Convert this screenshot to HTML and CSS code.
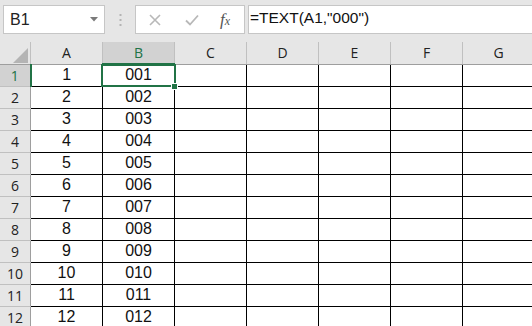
FILE: index.html
```html
<!DOCTYPE html>
<html lang="en">
<head>
    <meta charset="UTF-8">
    <title>Sheet1</title>
    <link rel="stylesheet" href="styles.css">
</head>
<body>
    <div class="formula-bar">
        <div class="name-box">
            <span>B1</span>
            <svg class="drop" width="8" height="5" viewBox="0 0 8 5"><path d="M0 0h8L4 4.5z" fill="#7a7a7a"/></svg>
        </div>
        <div class="grip">
            <svg width="3" height="12" viewBox="0 0 3 12"><rect x="0.5" y="0" width="2" height="2" fill="#b4b4b4"/><rect x="0.5" y="5" width="2" height="2" fill="#b4b4b4"/><rect x="0.5" y="10" width="2" height="2" fill="#b4b4b4"/></svg>
        </div>
        <div class="fx-box">
            <svg width="12" height="12" viewBox="0 0 12 12"><path d="M1 1l10 10M11 1L1 11" stroke="#b8b8b8" stroke-width="1.6"/></svg>
            <svg width="14" height="12" viewBox="0 0 14 12"><path d="M1 6.5l4 4L13 1.5" stroke="#b8b8b8" stroke-width="1.8" fill="none"/></svg>
            <span class="fx">f<sub>x</sub></span>
        </div>
        <div class="formula">=TEXT(A1,"000")</div>
    </div>

    <table class="sheet">
        <tr class="col-head">
            <th class="corner"><span class="tri"></span></th>
            <th>A</th>
            <th class="on">B</th>
            <th>C</th>
            <th>D</th>
            <th>E</th>
            <th>F</th>
            <th>G</th>
        </tr>
        <tr>
            <th class="row-head on">1</th><td>1</td><td class="sel">001</td><td></td><td></td><td></td><td></td><td></td>
        </tr>
        <tr><th class="row-head">2</th><td>2</td><td>002</td><td></td><td></td><td></td><td></td><td></td></tr>
        <tr><th class="row-head">3</th><td>3</td><td>003</td><td></td><td></td><td></td><td></td><td></td></tr>
        <tr><th class="row-head">4</th><td>4</td><td>004</td><td></td><td></td><td></td><td></td><td></td></tr>
        <tr><th class="row-head">5</th><td>5</td><td>005</td><td></td><td></td><td></td><td></td><td></td></tr>
        <tr><th class="row-head">6</th><td>6</td><td>006</td><td></td><td></td><td></td><td></td><td></td></tr>
        <tr><th class="row-head">7</th><td>7</td><td>007</td><td></td><td></td><td></td><td></td><td></td></tr>
        <tr><th class="row-head">8</th><td>8</td><td>008</td><td></td><td></td><td></td><td></td><td></td></tr>
        <tr><th class="row-head">9</th><td>9</td><td>009</td><td></td><td></td><td></td><td></td><td></td></tr>
        <tr><th class="row-head">10</th><td>10</td><td>010</td><td></td><td></td><td></td><td></td><td></td></tr>
        <tr><th class="row-head">11</th><td>11</td><td>011</td><td></td><td></td><td></td><td></td><td></td></tr>
        <tr><th class="row-head">12</th><td>12</td><td>012</td><td></td><td></td><td></td><td></td><td></td></tr>
    </table>
</body>
</html>
```

FILE: styles.css
```css
body {
    margin: 0;
    overflow: hidden;
    background: #fff;
    font-family: "Liberation Sans", Arial, sans-serif;
}
.formula-bar {
    display: flex;
    align-items: flex-start;
    height: 42px;
    padding: 5px 0 0 3px;
    box-sizing: border-box;
    background: #e6e6e6;
}
.name-box {
    display: flex;
    align-items: center;
    justify-content: space-between;
    width: 102px;
    height: 29px;
    box-sizing: border-box;
    padding: 0 6px 0 6px;
    background: #fff;
    border: 1px solid #c6c6c6;
    font-size: 16px;
    color: #222;
}
.grip {
    display: flex;
    justify-content: center;
    width: 30px;
    padding-top: 9px;
}
.fx-box {
    display: flex;
    align-items: center;
    width: 110px;
    height: 29px;
    box-sizing: border-box;
    padding: 0 10px 0 13px;
    gap: 24px;
    background: #fff;
    border: 1px solid #c6c6c6;
}
.fx {
    font-family: "Liberation Serif", serif;
    font-style: italic;
    font-size: 17px;
    color: #555;
    margin-left: -3px;
}
.fx sub {
    font-size: 12px;
    vertical-align: 0;
}
.formula {
    flex: 1;
    height: 29px;
    margin-left: 3px;
    box-sizing: border-box;
    padding: 3px 0 0 1px;
    background: #fff;
    border: 1px solid #c6c6c6;
    border-right: none;
    font-size: 15.5px;
    color: #111;
}
.sheet {
    border-collapse: collapse;
    table-layout: fixed;
    width: 535px;
}
.sheet tr {
    height: 22px;
}
.sheet th {
    background: #e6e6e6;
    font-family: "Open Sans", sans-serif;
    font-weight: normal;
    font-size: 14px;
    color: #222;
    padding: 0;
}
.col-head th {
    width: 71px;
    border-right: 1px solid #c0c0c0;
    border-bottom: 1px solid #9e9e9e;
}
.col-head th.corner {
    width: 30px;
    position: relative;
}
.tri {
    position: absolute;
    right: 2px;
    bottom: 1px;
    width: 0;
    height: 0;
    border-left: 15px solid transparent;
    border-bottom: 15px solid #b4b4b4;
}
.col-head th.on {
    background: #d2d2d2;
    color: #217346;
    border-bottom: 2px solid #217346;
}
.row-head {
    border-right: 1px solid #9e9e9e;
    border-bottom: 1px solid #c0c0c0;
}
.row-head.on {
    background: #d2d2d2;
    color: #217346;
    border-right: 2px solid #217346;
}
.sheet td {
    border: 1px solid #000;
    padding: 0;
    text-align: center;
    font-size: 16px;
    color: #111;
}
.sheet td.sel {
    position: relative;
}
.sel::after {
    content: "";
    position: absolute;
    top: -1px;
    left: -2px;
    right: -2px;
    bottom: -1px;
    border: 2px solid #217346;
}
.sel::before {
    content: "";
    position: absolute;
    right: -4px;
    bottom: -4px;
    width: 5px;
    height: 5px;
    background: #217346;
    border: 1px solid #fff;
    z-index: 1;
}
```
